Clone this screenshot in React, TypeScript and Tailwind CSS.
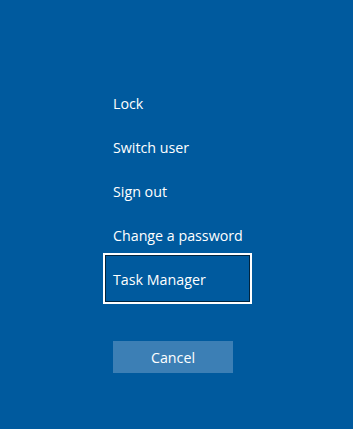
import React from 'react';

const items = ['Lock', 'Switch user', 'Sign out', 'Change a password', 'Task Manager'];

export default function App() {
  const focused = 'Task Manager';

  return (
    <div
      className="w-[353px] h-[429px] bg-[#005a9e] text-white overflow-hidden"
      style={{ fontFamily: '"Open Sans", "Noto Sans", sans-serif' }}
    >
      <div className="pt-[81px] pl-[103px] flex flex-col">
        {items.map((item) =>
          item === focused ? (
            <div
              key={item}
              className="w-[149px] h-[51px] -mt-[4px] -mb-[3px] border-2 border-white shadow-[inset_0_0_0_1px_rgba(0,0,0,0.6)] flex items-center pl-[8px] pt-[2px] text-[14.25px]"
            >
              {item}
            </div>
          ) : (
            <div key={item} className="w-[149px] h-[44px] flex items-center pl-[10px] pt-[2px] text-[14.25px]">
              {item}
            </div>
          )
        )}

        {/* Cancel */}
        <button className="ml-[10px] mt-[40px] w-[120px] h-[32px] pt-[2px] bg-[#3c7fb5] text-[14.25px] text-white">
          Cancel
        </button>
      </div>
    </div>
  );
}
